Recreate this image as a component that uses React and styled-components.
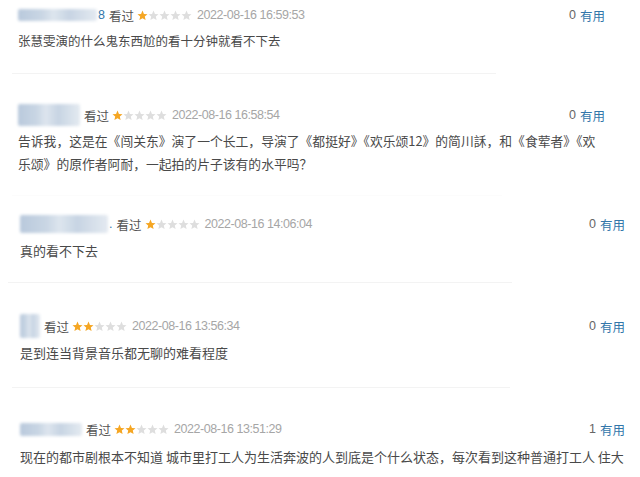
import styled, { createGlobalStyle } from "styled-components";

const GlobalStyle = createGlobalStyle`
  html, body {
    margin: 0;
    padding: 0;
    background: #fff;
  }
  body {
    font-family: "Noto Sans CJK SC", "Noto Sans", sans-serif;
    color: #494949;
  }
`;

const List = styled.div`
  width: 640px;
  height: 477px;
  overflow: hidden;
  display: flex;
  flex-direction: column;
`;

const Item = styled.div`
  display: flex;
  flex-direction: column;
  gap: ${(p) => p.$gap || 4}px;
  padding: ${(p) => p.$top}px ${(p) => p.$right}px ${(p) => p.$bottom}px
    ${(p) => p.$left}px;
`;

const Header = styled.div`
  display: flex;
  align-items: center;
  height: 20px;
`;

const Author = styled.div`
  display: flex;
  align-items: center;
`;

const Blur = styled.div`
  width: ${(p) => p.$w}px;
  height: ${(p) => p.$h}px;
  border-radius: 2px;
  background: linear-gradient(
    90deg,
    #b9c9dc 0%,
    #c9d6e4 30%,
    #dde5ee 45%,
    #c7d4e3 65%,
    #e4eaf1 100%
  );
  filter: blur(1.6px);
`;

const NameTail = styled.span`
  font-family: "Liberation Sans", sans-serif;
  font-size: 12.5px;
  color: #37a;
  margin-left: 1px;
`;

const Watched = styled.span`
  font-size: 12.5px;
  color: #555;
  margin-left: 4px;
`;

const Stars = styled.span`
  display: inline-flex;
  align-items: center;
  margin-left: 3px;
`;

const DateText = styled.span`
  font-family: "Liberation Sans", sans-serif;
  font-size: 12.5px;
  letter-spacing: -0.45px;
  color: #a6a6a6;
  margin-left: 5px;
`;

const Votes = styled.div`
  margin-left: auto;
  display: flex;
  align-items: center;
  gap: 4px;
  font-size: 12.5px;
`;

const Count = styled.span`
  font-family: "Liberation Sans", sans-serif;
  color: #666;
`;

const Useful = styled.span`
  color: #37a;
`;

const Body = styled.p`
  margin: 0;
  font-size: ${(p) => p.$size || 12.5}px;
  line-height: 23px;
  color: #494949;
`;

const Divider = styled.div`
  height: 1px;
  margin-left: ${(p) => p.$left}px;
  width: ${(p) => p.$w}px;
  background: ${(p) => p.$color || "#f3f3f3"};
`;

const Star = ({ on }) => (
  <svg width="11" height="11" viewBox="1 1.5 22 21">
    <path
      d="M12 2.2l2.9 6.6 7.1.6-5.4 4.7 1.6 7-6.2-3.7-6.2 3.7 1.6-7L2 9.4l7.1-.6z"
      fill={on ? "#f5a623" : "#dedede"}
    />
  </svg>
);

const Rating = ({ value }) => (
  <Stars>
    {[1, 2, 3, 4, 5].map((i) => (
      <Star key={i} on={i <= value} />
    ))}
  </Stars>
);

const comments = [
  {
    blur: [79, 12],
    tail: "8",
    rating: 1,
    date: "2022-08-16 16:59:53",
    votes: 0,
    text: ["张慧雯演的什么鬼东西尬的看十分钟就看不下去"],
    pad: { top: 5, right: 35, bottom: 21, left: 18 },
    size: 12.5,
    divider: { left: 12, w: 484 },
  },
  {
    blur: [62, 22],
    rating: 1,
    date: "2022-08-16 16:58:54",
    votes: 0,
    text: [
      "告诉我，这是在《闯关东》演了一个长工，导演了《都挺好》《欢乐颂12》的简川訸，和《食荤者》《欢",
      "乐颂》的原作者阿耐，一起拍的片子该有的水平吗？",
    ],
    pad: { top: 31, right: 35, bottom: 20, left: 18 },
    size: 12.8,
    divider: { left: 12, w: 490, color: "#fcfcfc" },
  },
  {
    blur: [88, 18],
    tail: ".",
    rating: 1,
    date: "2022-08-16 14:06:04",
    votes: 0,
    text: ["真的看不下去"],
    pad: { top: 18, right: 15, bottom: 20, left: 20 },
    size: 13,
    gap: 5,
    divider: { left: 8, w: 504 },
  },
  {
    blur: [20, 24],
    rating: 2,
    date: "2022-08-16 13:56:34",
    votes: 0,
    text: ["是到连当背景音乐都无聊的难看程度"],
    pad: { top: 33, right: 15, bottom: 23, left: 20 },
    size: 13,
    gap: 5,
    divider: { left: 12, w: 498 },
  },
  {
    blur: [62, 13],
    rating: 2,
    date: "2022-08-16 13:51:29",
    votes: 1,
    text: [
      "现在的都市剧根本不知道 城市里打工人为生活奔波的人到底是个什么状态，每次看到这种普通打工人 住大",
    ],
    pad: { top: 31, right: 15, bottom: 10, left: 20 },
    size: 13,
    gap: 6,
  },
];

export default function App() {
  return (
    <>
      <GlobalStyle />
      <List>
        {comments.map((c, idx) => (
          <div key={idx}>
            <Item
              $top={c.pad.top}
              $right={c.pad.right}
              $bottom={c.pad.bottom}
              $left={c.pad.left}
              $gap={c.gap}
            >
              <Header>
                <Author>
                  <Blur $w={c.blur[0]} $h={c.blur[1]} />
                  {c.tail && <NameTail>{c.tail}</NameTail>}
                  <Watched>看过</Watched>
                  <Rating value={c.rating} />
                  <DateText>{c.date}</DateText>
                </Author>
                <Votes>
                  <Count>{c.votes}</Count>
                  <Useful>有用</Useful>
                </Votes>
              </Header>
              <Body $size={c.size}>
                {c.text.map((line, i) => (
                  <span key={i}>
                    {line}
                    {i < c.text.length - 1 && <br />}
                  </span>
                ))}
              </Body>
            </Item>
            {c.divider && (
              <Divider
                $left={c.divider.left}
                $w={c.divider.w}
                $color={c.divider.color}
              />
            )}
          </div>
        ))}
      </List>
    </>
  );
}
